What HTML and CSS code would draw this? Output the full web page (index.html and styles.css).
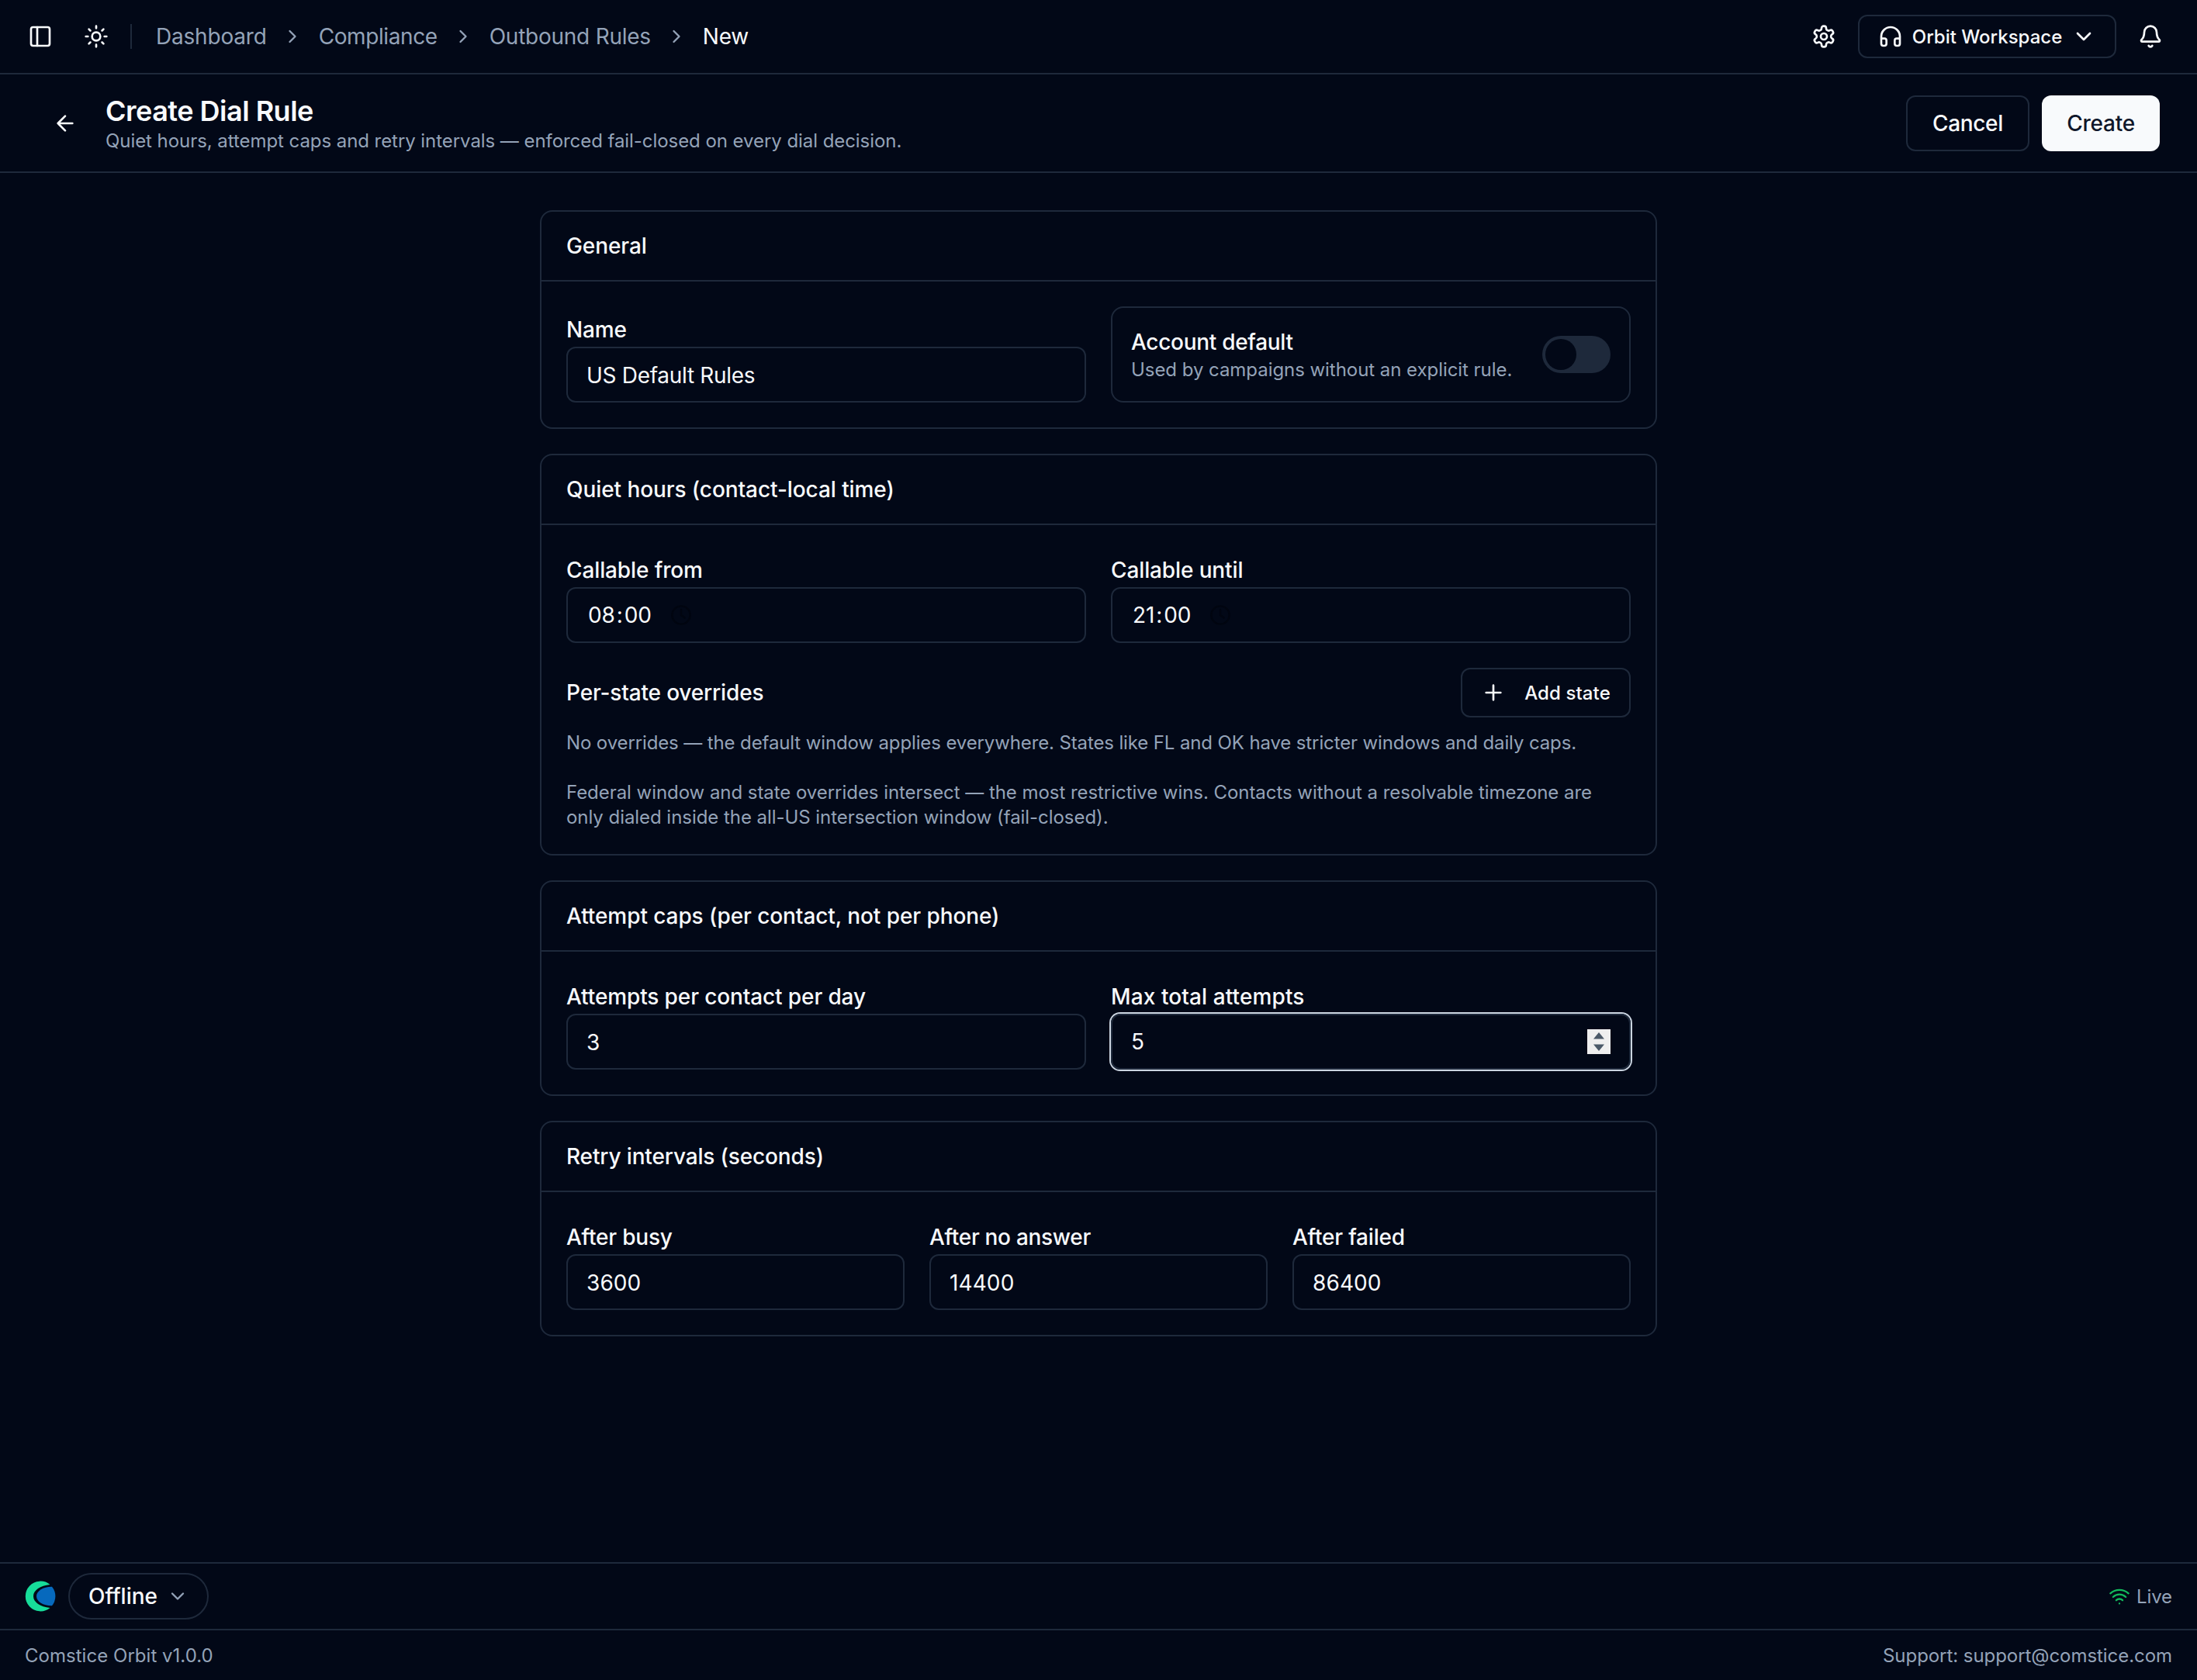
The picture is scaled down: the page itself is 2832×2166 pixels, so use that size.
FILE: index.html
```html
<!DOCTYPE html>
<html lang="en">
<head>
<meta charset="utf-8">
<title>Create Dial Rule</title>
<link rel="stylesheet" href="styles.css">
</head>
<body>
<header class="topbar">
  <div class="topbar-left">
    <svg class="icon" viewBox="0 0 24 24"><rect width="18" height="18" x="3" y="3" rx="2"/><path d="M9 3v18"/></svg>
    <svg class="icon icon-sun" viewBox="0 0 24 24"><circle cx="12" cy="12" r="4"/><path d="M12 2v2M12 20v2M4.93 4.93l1.41 1.41M17.66 17.66l1.41 1.41M2 12h2M20 12h2M6.34 17.66l-1.41 1.41M19.07 4.93l-1.41 1.41"/></svg>
    <span class="divider"></span>
    <nav class="crumbs">
      <a class="crumb crumb-first">Dashboard</a>
      <svg class="icon icon-sm" viewBox="0 0 24 24"><path d="m9 18 6-6-6-6"/></svg>
      <a class="crumb crumb-tight">Compliance</a>
      <svg class="icon icon-sm" viewBox="0 0 24 24"><path d="m9 18 6-6-6-6"/></svg>
      <a class="crumb">Outbound Rules</a>
      <svg class="icon icon-sm" viewBox="0 0 24 24"><path d="m9 18 6-6-6-6"/></svg>
      <span class="crumb crumb-current">New</span>
    </nav>
  </div>
  <div class="topbar-right">
    <svg class="icon" viewBox="0 0 24 24"><path d="M12.22 2h-.44a2 2 0 0 0-2 2v.18a2 2 0 0 1-1 1.73l-.43.25a2 2 0 0 1-2 0l-.15-.08a2 2 0 0 0-2.73.73l-.22.38a2 2 0 0 0 .73 2.73l.15.1a2 2 0 0 1 1 1.72v.51a2 2 0 0 1-1 1.74l-.15.09a2 2 0 0 0-.73 2.73l.22.38a2 2 0 0 0 2.73.73l.15-.08a2 2 0 0 1 2 0l.43.25a2 2 0 0 1 1 1.73V20a2 2 0 0 0 2 2h.44a2 2 0 0 0 2-2v-.18a2 2 0 0 1 1-1.73l.43-.25a2 2 0 0 1 2 0l.15.08a2 2 0 0 0 2.73-.73l.22-.39a2 2 0 0 0-.73-2.73l-.15-.08a2 2 0 0 1-1-1.74v-.5a2 2 0 0 1 1-1.74l.15-.09a2 2 0 0 0 .73-2.73l-.22-.38a2 2 0 0 0-2.73-.73l-.15.08a2 2 0 0 1-2 0l-.43-.25a2 2 0 0 1-1-1.73V4a2 2 0 0 0-2-2z"/><circle cx="12" cy="12" r="3"/></svg>
    <button class="btn btn-workspace">
      <svg class="icon" viewBox="0 0 24 24"><path d="M3 14h3a2 2 0 0 1 2 2v3a2 2 0 0 1-2 2H5a2 2 0 0 1-2-2v-7a9 9 0 0 1 18 0v7a2 2 0 0 1-2 2h-1a2 2 0 0 1-2-2v-3a2 2 0 0 1 2-2h3"/></svg>
      <span>Orbit Workspace</span>
      <svg class="icon" viewBox="0 0 24 24"><path d="m6 9 6 6 6-6"/></svg>
    </button>
    <svg class="icon icon-bell" viewBox="0 0 24 24"><path d="M10.268 21a2 2 0 0 0 3.464 0"/><path d="M3.262 15.326A1 1 0 0 0 4 17h16a1 1 0 0 0 .74-1.673C19.41 13.956 18 12.499 18 8A6 6 0 0 0 6 8c0 4.499-1.411 5.956-2.738 7.326"/></svg>
  </div>
</header>

<section class="pagehead">
  <a class="back"><svg class="icon" viewBox="0 0 24 24"><path d="m12 19-7-7 7-7M19 12H5"/></svg></a>
  <div class="heading">
    <h1 class="title">Create Dial Rule</h1>
    <p class="subtitle">Quiet hours, attempt caps and retry intervals — enforced fail-closed on every dial decision.</p>
  </div>
  <div class="actions">
    <button class="btn btn-cancel">Cancel</button>
    <button class="btn btn-create">Create</button>
  </div>
</section>

<main class="main">
  <section class="card">
    <h2 class="card-title">General</h2>
    <div class="card-body cols-2 align-end">
      <div class="field">
        <label class="label">Name</label>
        <div class="input tight">US Default Rules</div>
      </div>
      <div class="switch-row">
        <div>
          <div class="switch-title">Account default</div>
          <div class="note">Used by campaigns without an explicit rule.</div>
        </div>
        <span class="switch"><span class="thumb"></span></span>
      </div>
    </div>
  </section>

  <section class="card">
    <h2 class="card-title">Quiet hours (contact-local time)</h2>
    <div class="card-body">
      <div class="cols-2">
        <div class="field">
          <label class="label">Callable from</label>
          <div class="input time"><span>08</span>:<span>00</span><svg class="icon clock" viewBox="0 0 24 24"><circle cx="12" cy="12" r="10"/><path d="M12 6v6l4 3"/></svg></div>
        </div>
        <div class="field">
          <label class="label">Callable until</label>
          <div class="input time"><span>21</span>:<span>00</span><svg class="icon clock" viewBox="0 0 24 24"><circle cx="12" cy="12" r="10"/><path d="M12 6v6l4 3"/></svg></div>
        </div>
      </div>
      <div class="overrides-head">
        <h3 class="overrides-title">Per-state overrides</h3>
        <button class="btn btn-add"><svg class="icon" viewBox="0 0 24 24"><path d="M5 12h14M12 5v14"/></svg><span>Add state</span></button>
      </div>
      <p class="note note-empty">No overrides — the default window applies everywhere. States like FL and OK have stricter windows and daily caps.</p>
      <p class="note note-federal">Federal window and state overrides intersect — the most restrictive wins. Contacts without a resolvable timezone are only dialed inside the all-US intersection window (fail-closed).</p>
    </div>
  </section>

  <section class="card">
    <h2 class="card-title">Attempt caps (per contact, not per phone)</h2>
    <div class="card-body cols-2">
      <div class="field">
        <label class="label">Attempts per contact per day</label>
        <div class="input">3</div>
      </div>
      <div class="field">
        <label class="label wide">Max total attempts</label>
        <div class="input focused">5<svg class="spinner" viewBox="0 0 30 32"><rect width="30" height="32" fill="#efefef"/><path d="M15 4l7 8.5H8zM15 28l7-8.5H8z" fill="#4b5968"/></svg></div>
      </div>
    </div>
  </section>

  <section class="card">
    <h2 class="card-title retry">Retry intervals (seconds)</h2>
    <div class="card-body cols-3">
      <div class="field">
        <label class="label snug">After busy</label>
        <div class="input number">3600</div>
      </div>
      <div class="field">
        <label class="label tight">After no answer</label>
        <div class="input number">14400</div>
      </div>
      <div class="field">
        <label class="label snug">After failed</label>
        <div class="input number">86400</div>
      </div>
    </div>
  </section>
</main>

<div class="statusbar">
  <svg class="logo" viewBox="0 0 40 40"><path d="M32.5 5A19.4 19.4 0 1 0 32.5 35C20 33.5 11 28 11 20C11 12 20 6.5 32.5 5Z" fill="#17dd9a"/><path d="M35 7.7A19.5 19.5 0 0 1 35 32.3C24 32.5 15 27 15 20C15 13 24 7.5 35 7.7Z" fill="#0669bd"/></svg>
  <button class="presence"><span>Offline</span><svg class="icon icon-sm" viewBox="0 0 24 24"><path d="m6 9 6 6 6-6"/></svg></button>
  <div class="live"><svg class="icon icon-sm" viewBox="0 0 24 24"><path d="M12 20h.01M2 8.82a15 15 0 0 1 20 0M5 12.859a10 10 0 0 1 14 0M8.5 16.429a5 5 0 0 1 7 0"/></svg><span>Live</span></div>
</div>
<footer class="footer">
  <span>Comstice Orbit v1.0.0</span>
  <span class="support">Support: support@comstice.com</span>
</footer>
</body>
</html>
```
FILE: styles.css
```css
:root {
  --bg: #020817;
  --fg: #f8fafc;
  --muted: #94a3b8;
  --border: #1e293b;
}

* { box-sizing: border-box; }

body {
  margin: 0;
  min-height: 2166px;
  display: flex;
  flex-direction: column;
  background: var(--bg);
  color: var(--fg);
  font-family: Inter, "Liberation Sans", sans-serif;
  font-size: 28px;
  letter-spacing: -0.12px;
}

h1, h2, h3, p { margin: 0; }

.icon {
  width: 32px;
  height: 32px;
  flex: none;
  fill: none;
  stroke: currentColor;
  stroke-width: 2;
  stroke-linecap: round;
  stroke-linejoin: round;
}
.icon-sm { width: 28px; height: 28px; }

.btn {
  display: flex;
  align-items: center;
  justify-content: center;
  height: 72px;
  padding: 0;
  border: 2px solid var(--border);
  border-radius: 12px;
  background: none;
  color: var(--fg);
  font: 500 28px Inter, "Liberation Sans", sans-serif;
  letter-spacing: -0.35px;
}

/* Top bar */
.topbar {
  display: flex;
  align-items: center;
  justify-content: space-between;
  height: 96px;
  padding: 0 44px 0 36px;
  border-bottom: 2px solid var(--border);
}
.topbar-left, .topbar-right, .crumbs { display: flex; align-items: center; }
.icon-sun { margin-left: 40px; }
.divider {
  width: 2px;
  height: 32px;
  margin: 0 31px 0 28px;
  background: var(--border);
}
.crumbs { gap: 19.5px; color: var(--muted); letter-spacing: -0.25px; }
.crumb-first { letter-spacing: -0.2px; }
.crumb-tight { letter-spacing: -0.4px; }
.crumb-current { color: var(--fg); }
.btn-workspace {
  width: 333px;
  height: 56px;
  gap: 12px;
  margin: 0 28px;
  font-size: 24px;
  letter-spacing: 0;
}

/* Page heading */
.pagehead {
  display: flex;
  align-items: flex-start;
  gap: 16px;
  padding: 27px 48px 23px;
  border-bottom: 2px solid var(--border);
}
.back {
  display: flex;
  align-items: center;
  justify-content: center;
  width: 72px;
  height: 72px;
}
.heading { flex: 1; }
.title { font-size: 36px; font-weight: 600; line-height: 40px; letter-spacing: -0.5px; }
.subtitle { margin-top: 3px; font-size: 24px; line-height: 32px; color: var(--muted); letter-spacing: -0.06px; }
.actions { display: flex; gap: 16px; }
.btn-cancel { width: 159px; }
.btn-create { width: 152px; border: 0; background: var(--fg); color: #0f172a; letter-spacing: -0.24px; }

/* Form cards */
.main {
  flex: 1;
  display: flex;
  flex-direction: column;
  gap: 32px;
  width: 1440px;
  margin: 0 auto;
  padding-top: 48px;
}
.card { border: 2px solid var(--border); border-radius: 16px; }
.card-title {
  padding: 0 32px;
  border-bottom: 2px solid var(--border);
  font-size: 28px;
  font-weight: 500;
  line-height: 88px;
  letter-spacing: -0.08px;
}
.retry { letter-spacing: -0.14px; }
.card-body { padding: 32px; }
.cols-2 { display: grid; grid-template-columns: 1fr 1fr; gap: 32px; }
.cols-3 { display: grid; grid-template-columns: 1fr 1fr 1fr; gap: 32px; }
.align-end { align-items: end; }
.label { display: block; padding-top: 4px; line-height: 44px; font-weight: 500; }
.input {
  display: flex;
  align-items: center;
  height: 72px;
  padding: 2px 24px 0;
  border: 2px solid var(--border);
  border-radius: 12px;
}
.tight { letter-spacing: -0.3px; }
.snug { letter-spacing: -0.2px; }
.wide { letter-spacing: 0.1px; }
.number { letter-spacing: 0.1px; }
.time { padding-top: 0; }
.time span { padding: 0 2px; }
.clock { width: 28px; height: 28px; margin-left: 22px; color: #010510; }
.focused { justify-content: space-between; padding-top: 0; box-shadow: 0 0 0 2px #cbd5e1; }
.spinner { width: 30px; height: 32px; }

.note { font-size: 24px; line-height: 32px; color: var(--muted); letter-spacing: -0.05px; }
.note-empty { margin-top: 17px; letter-spacing: -0.125px; }
.note-federal { margin-top: 32px; margin-bottom: -1px; }

.switch-row {
  display: flex;
  align-items: center;
  justify-content: space-between;
  height: 124px;
  padding: 0 24px;
  border: 2px solid var(--border);
  border-radius: 16px;
}
.switch-title { font-weight: 500; line-height: 40px; letter-spacing: -0.3px; }
.switch { width: 88px; height: 48px; padding: 4px; border-radius: 24px; background: var(--border); }
.thumb { display: block; width: 40px; height: 40px; border-radius: 50%; background: var(--bg); }

.overrides-head { display: flex; align-items: center; justify-content: space-between; margin-top: 32px; }
.overrides-title { font-size: 28px; font-weight: 500; letter-spacing: -0.16px; }
.btn-add { width: 219px; height: 64px; gap: 24px; font-size: 24px; letter-spacing: 0.1px; }

/* Status bar and footer */
.statusbar {
  display: flex;
  align-items: center;
  height: 86px;
  padding: 0 32px;
  border-top: 2px solid var(--border);
}
.logo { width: 40px; height: 40px; }
.presence {
  display: flex;
  align-items: center;
  gap: 12px;
  height: 60px;
  width: 181px;
  margin-left: 16px;
  padding: 0 0 0 24px;
  border: 2px solid var(--border);
  border-radius: 30px;
  background: none;
  color: var(--fg);
  font: 500 28px Inter, "Liberation Sans", sans-serif;
}
.presence .icon { color: var(--muted); }
.live { display: flex; align-items: center; gap: 8px; margin-left: auto; font-size: 24px; color: var(--muted); }
.live .icon { color: #12b95c; }
.footer {
  display: flex;
  align-items: center;
  justify-content: space-between;
  height: 66px;
  padding: 0 32px;
  border-top: 2px solid var(--border);
  font-size: 24px;
  color: var(--muted);
  letter-spacing: 0.03px;
}
.support { letter-spacing: -0.056px; }
```
